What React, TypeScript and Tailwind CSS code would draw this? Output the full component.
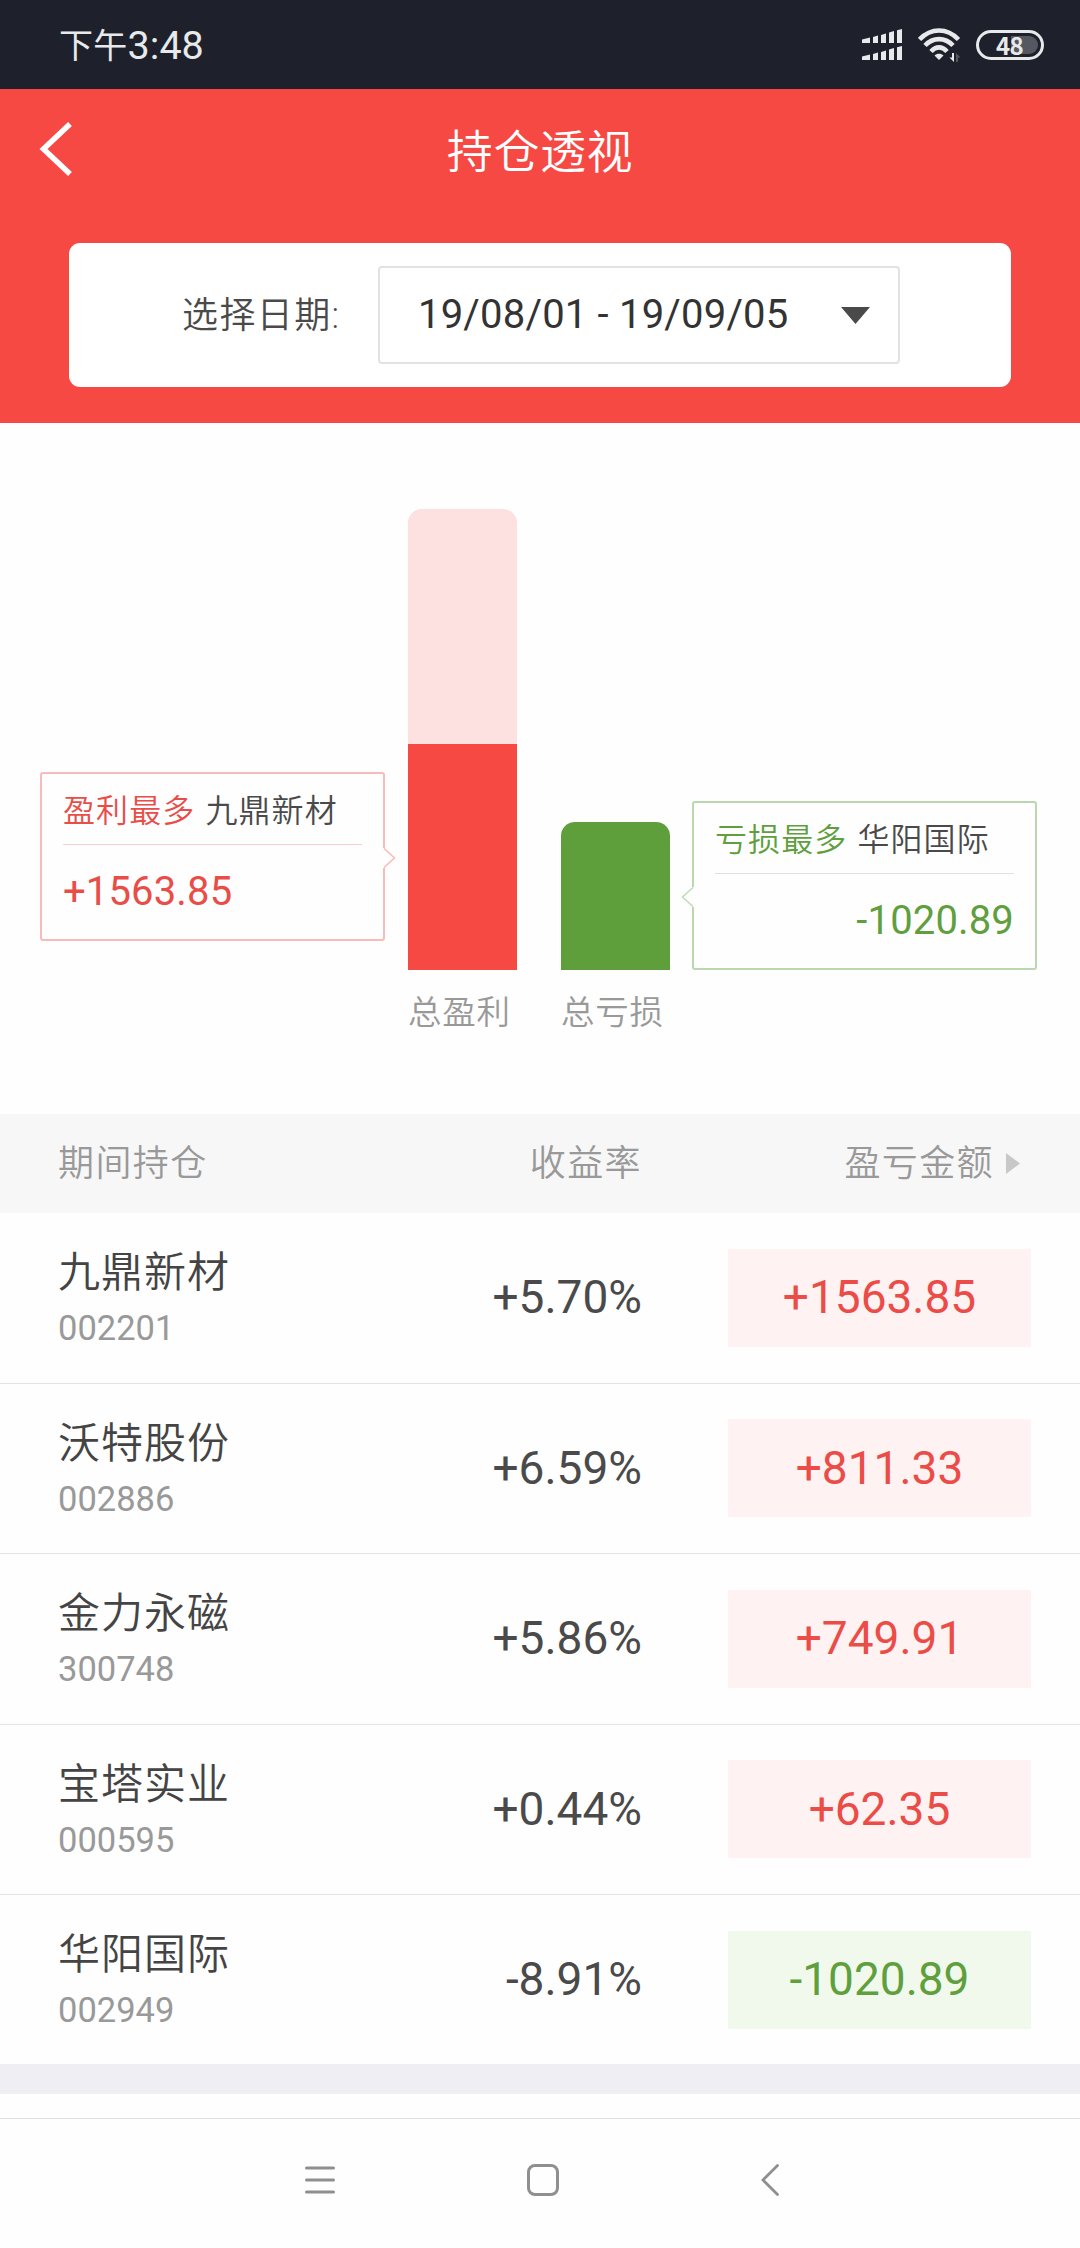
import clsx from "clsx"

interface Holding {
  name: string
  code: string
  rate: string
  amount: string
}

const holdings: Holding[] = [
  { name: "九鼎新材", code: "002201", rate: "+5.70%", amount: "+1563.85" },
  { name: "沃特股份", code: "002886", rate: "+6.59%", amount: "+811.33" },
  { name: "金力永磁", code: "300748", rate: "+5.86%", amount: "+749.91" },
  { name: "宝塔实业", code: "000595", rate: "+0.44%", amount: "+62.35" },
  { name: "华阳国际", code: "002949", rate: "-8.91%", amount: "-1020.89" },
]

function SignalRow() {
  return (
    <svg width="40" height="14" viewBox="0 0 40 14" fill="#e8e9ea">
      <path d="M0 10.5L8 8.5V14H0zM11 8L16 6.5V14H11zM19 6L24 4.5V14H19zM27 3.5L32 2V14H27zM35 1.2L40 0V14H35z" />
    </svg>
  )
}

function StatusBar() {
  return (
    <div className="flex h-[89px] items-center justify-between bg-[#1e212b] pl-[59px] pr-9 text-[#e8e9ea]">
      <div className="flex items-center whitespace-nowrap pt-[3px]">
        <span className="text-[34px] leading-none tracking-[0.3px]">下午</span>
        <span className="text-[39.5px] leading-none">3:48</span>
      </div>
      <div className="flex items-center">
        <div className="flex flex-col gap-[3px]">
          <SignalRow />
          <SignalRow />
        </div>
        <svg className="ml-4" width="44" height="34" viewBox="0 0 44 34" fill="none">
          <path d="M1.5 11.5C13 -0.5 29 -0.5 40.5 11.5" stroke="#e8e9ea" strokeWidth="4.6" />
          <path d="M7 17.5C15 9 27 9 35 17.5" stroke="#e8e9ea" strokeWidth="4.6" />
          <path d="M13 23.5C18 18 24 18 29 23.5" stroke="#e8e9ea" strokeWidth="4.6" />
          <path d="M21 32L16.5 27.5C19 25 23 25 25.5 27.5Z" fill="#e8e9ea" />
          <path d="M36 25V34L31.5 29.5H34V25Z" fill="#e8e9ea" />
          <path d="M38 34V25L42.5 29.5H40V34Z" fill="#555861" />
        </svg>
        <div className="ml-3.5 flex h-[30px] w-[68px] items-center rounded-full border-[3px] border-[#e8e9ea] p-[3px]">
          <div className="flex h-[18px] w-full items-center rounded-full bg-[linear-gradient(to_right,transparent_52%,#555861_52%)] pl-[14px]">
            <span className="font-['Noto_Sans_CJK_SC'] text-[24px] font-bold leading-none tracking-[-0.6px]">48</span>
          </div>
        </div>
      </div>
    </div>
  )
}

function Header() {
  return (
    <header className="h-[334px] bg-[#f64944] pt-[33px]">
      <div className="grid h-[54px] grid-cols-[1fr_auto_1fr] items-center px-[39px]">
        <svg width="34" height="54" viewBox="0 0 34 54" fill="none">
          <path d="M31 2L4.5 27L31 52" stroke="#fff" strokeWidth="5.5" />
        </svg>
        <h1 className="pt-[5px] text-[46px] font-[350] leading-none tracking-[0.6px] text-white">持仓透视</h1>
      </div>
      <div className="mx-[69px] mt-[67px] flex h-36 items-center rounded-[11px] bg-white pl-[113px]">
        <span className="w-[196px] whitespace-nowrap pt-0.5 text-[36px] font-[350] tracking-[1.4px] text-[#4a4a4a]">
          选择日期:
        </span>
        <div className="flex h-[98px] w-[522px] items-center justify-between rounded-[4px] border-2 border-[#e2e2e2] pl-[38px] pr-[28px]">
          <span className="whitespace-nowrap text-[40px] tracking-[0.2px] text-[#333]">19/08/01 - 19/09/05</span>
          <svg width="29" height="17" viewBox="0 0 29 17">
            <path d="M0 0H29L14.5 17Z" fill="#4a4a4a" />
          </svg>
        </div>
      </div>
    </header>
  )
}

interface CalloutProps {
  label: string
  stock: string
  amount: string
  loss?: boolean
}

function Callout({ label, stock, amount, loss }: CalloutProps) {
  return (
    <div
      className={clsx(
        "relative h-[169px] w-[345px] rounded-[3px] border-2 px-[21px]",
        loss ? "border-[#b9d8ad]" : "mb-[29px] border-[#f9bbb9]",
      )}
    >
      <div
        className={clsx(
          "flex h-[71px] items-center gap-2.5 whitespace-nowrap border-b pt-[3px] text-[32px] font-[350] tracking-[1.1px]",
          loss ? "border-[#dfe3da]" : "border-[#fbcfce]",
        )}
      >
        <span className={loss ? "text-[#5f9f3d]" : "text-[#e94d48]"}>{label}</span>
        <span className="text-[#4a4a4a]">{stock}</span>
      </div>
      <div
        className={clsx(
          "flex h-[94px] items-center text-[40px] tracking-[0.15px]",
          loss ? "justify-end text-[#5f9f3d]" : "text-[#e94d48]",
        )}
      >
        {amount}
      </div>
      {/* Arrow pointing at the bar */}
      <svg
        className={clsx("absolute", loss ? "-left-[13px] top-[84px] -scale-x-100" : "-right-[13px] top-[74px]")}
        width="13"
        height="20"
        viewBox="0 0 13 20"
      >
        <path d="M0 0H2V20H0z" fill="#fefefe" />
        <path d="M1 0.5L11.5 10L1 19.5" fill="#fefefe" stroke={loss ? "#bfdcb4" : "#f9bab8"} strokeWidth="1.5" />
      </svg>
    </div>
  )
}

function Chart() {
  return (
    <section className="h-[691px]">
      <div className="flex h-[547px] items-end pl-10">
        <Callout label="盈利最多" stock="九鼎新材" amount="+1563.85" />
        <div className="ml-[23px] flex h-[461px] w-[109px] flex-col justify-end overflow-hidden rounded-t-[14px] bg-[#fde1e0]">
          <div className="h-[226px] bg-[#f64944]" />
        </div>
        <div className="ml-11 mr-[22px] h-[148px] w-[109px] rounded-t-[14px] bg-[#5f9f3b]" />
        <Callout label="亏损最多" stock="华阳国际" amount="-1020.89" loss />
      </div>
      <div className="mt-[21px] flex gap-[44px] whitespace-nowrap pl-[408px] text-[33.5px] font-[350] leading-[44px] tracking-[0.8px] text-[#999]">
        <span className="w-[109px]">总盈利</span>
        <span className="w-[109px]">总亏损</span>
      </div>
    </section>
  )
}

function HoldingRow({ holding, last }: { holding: Holding; last: boolean }) {
  const loss = holding.amount.startsWith("-")

  return (
    <div
      className={clsx(
        "grid grid-cols-[300px_1fr_303px] items-center pl-[58px] pr-[49px]",
        last ? "h-[169px]" : "h-[170.5px] border-b border-[#e4e4e4]",
      )}
    >
      <div className="pt-1">
        <div className="text-[42px] font-[350] leading-[52px] tracking-[1px] text-[#444]">{holding.name}</div>
        <div className="mt-[5px] text-[34.5px] leading-[48px] text-[#999]">{holding.code}</div>
      </div>
      <div className="pr-[86px] text-right text-[46px] text-[#4a4a4a]">{holding.rate}</div>
      <div
        className={clsx(
          "flex h-[98px] items-center justify-center text-[46px]",
          loss ? "bg-[#f0f9ec] text-[#5f9f3d]" : "bg-[#fef3f2] text-[#ec4c47]",
        )}
      >
        {holding.amount}
      </div>
    </div>
  )
}

function HoldingsTable() {
  return (
    <section>
      <div className="grid h-[99px] grid-cols-[300px_1fr_303px] items-center bg-[#f7f7f7] pl-[58px] pr-[49px] text-[36px] font-[350] tracking-[1.4px] text-[#999]">
        <span>期间持仓</span>
        <span className="pr-[86px] text-right">收益率</span>
        <span className="flex items-center justify-end gap-3 pr-[11px]">
          盈亏金额
          <svg width="14" height="21" viewBox="0 0 14 21">
            <path d="M0 0L14 10.5L0 21Z" fill="#c8c8c8" />
          </svg>
        </span>
      </div>
      {holdings.map((holding, i) => (
        <HoldingRow key={holding.code} holding={holding} last={i === holdings.length - 1} />
      ))}
    </section>
  )
}

function NavBar() {
  return (
    <nav className="mt-6 flex h-[130px] items-center border-t border-[#dedede] pb-[7px] pl-[305px]">
      <svg width="30" height="32" viewBox="0 0 30 32" stroke="#8f8f8f" strokeWidth="3" strokeLinecap="round">
        <path d="M1.5 4H28.5M1.5 16H28.5M1.5 28H28.5" />
      </svg>
      <svg className="ml-[192px]" width="32" height="32" viewBox="0 0 32 32" fill="none">
        <rect x="1.5" y="1.5" width="29" height="29" rx="6.5" stroke="#8f8f8f" strokeWidth="3" />
      </svg>
      <svg className="ml-[202px]" width="18" height="32" viewBox="0 0 18 32" fill="none">
        <path d="M16.5 1.5L2 16L16.5 30.5" stroke="#8f8f8f" strokeWidth="2.8" strokeLinecap="round" />
      </svg>
    </nav>
  )
}

export default function App() {
  return (
    <div className="h-[2248px] w-[1080px] overflow-hidden bg-[#fefefe] font-[Roboto,'Noto_Sans_CJK_SC',sans-serif]">
      <StatusBar />
      <Header />
      <Chart />
      <HoldingsTable />
      <div className="h-[30px] bg-[#eeeef3]" />
      <NavBar />
    </div>
  )
}
